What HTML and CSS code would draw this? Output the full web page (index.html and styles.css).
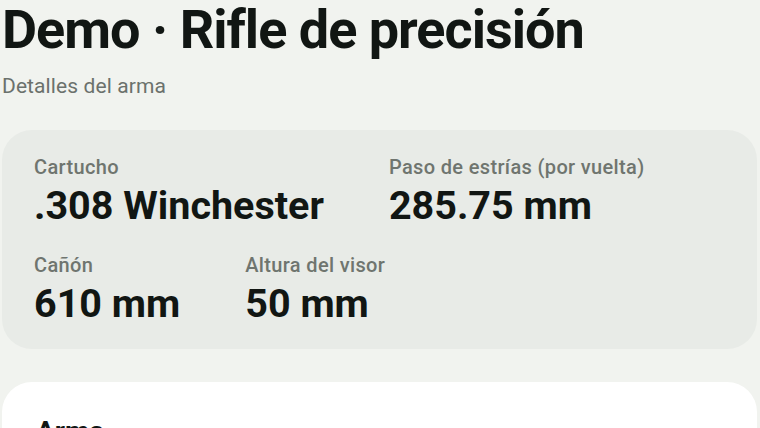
FILE: index.html
```html
<!DOCTYPE html>
<html lang="es">
<head>
<meta charset="utf-8">
<title>Demo · Rifle de precisión</title>
<link rel="stylesheet" href="styles.css">
</head>
<body>
<main class="page">
  <h1 class="title">Demo · Rifle de precisión</h1>
  <p class="subtitle">Detalles del arma</p>
  <section class="summary">
    <div class="row">
      <div class="field">
        <div class="label">Cartucho</div>
        <div class="value">.308 Winchester</div>
      </div>
      <div class="field">
        <div class="label">Paso de estrías (por vuelta)</div>
        <div class="value">285.75 mm</div>
      </div>
    </div>
    <div class="row">
      <div class="field">
        <div class="label">Cañón</div>
        <div class="value">610 mm</div>
      </div>
      <div class="field">
        <div class="label">Altura del visor</div>
        <div class="value">50 mm</div>
      </div>
    </div>
  </section>
  <section class="panel">
    <h2 class="panel-title">Arma</h2>
  </section>
</main>
</body>
</html>
```

FILE: styles.css
```css
html, body {
  margin: 0;
  padding: 0;
  background: #f1f3ef;
  overflow: hidden;
}
body {
  font-family: Roboto, "Noto Sans", sans-serif;
  color: #111613;
}
.page {
  padding: 0 3px 0 2px;
  display: flex;
  flex-direction: column;
}
.title {
  margin: 0;
  font-size: 54px;
  line-height: 60px;
  font-weight: 700;
  letter-spacing: -1px;
  color: #111613;
}
.subtitle {
  margin: 14px 0 0;
  font-size: 21px;
  line-height: 24px;
  letter-spacing: 0.1px;
  color: #6b716c;
}
.summary {
  margin-top: 32px;
  background: #e8ebe7;
  border-radius: 30px;
  padding: 25px 32px 23px;
  display: flex;
  flex-direction: column;
  gap: 25px;
}
.row {
  display: flex;
  gap: 65px;
}
.field {
  display: flex;
  flex-direction: column;
  gap: 4px;
}
.label {
  font-size: 20px;
  line-height: 24px;
  font-weight: 500;
  color: #6f756f;
  letter-spacing: 0.35px;
}
.value {
  font-size: 39.5px;
  line-height: 45px;
  font-weight: 700;
  color: #111613;
}
.panel {
  margin-top: 33px;
  background: #ffffff;
  border-radius: 30px;
  padding: 34px 34px 30px;
  height: 200px;
}
.panel-title {
  margin: 0;
  font-size: 28px;
  line-height: 32px;
  font-weight: 700;
}
```
